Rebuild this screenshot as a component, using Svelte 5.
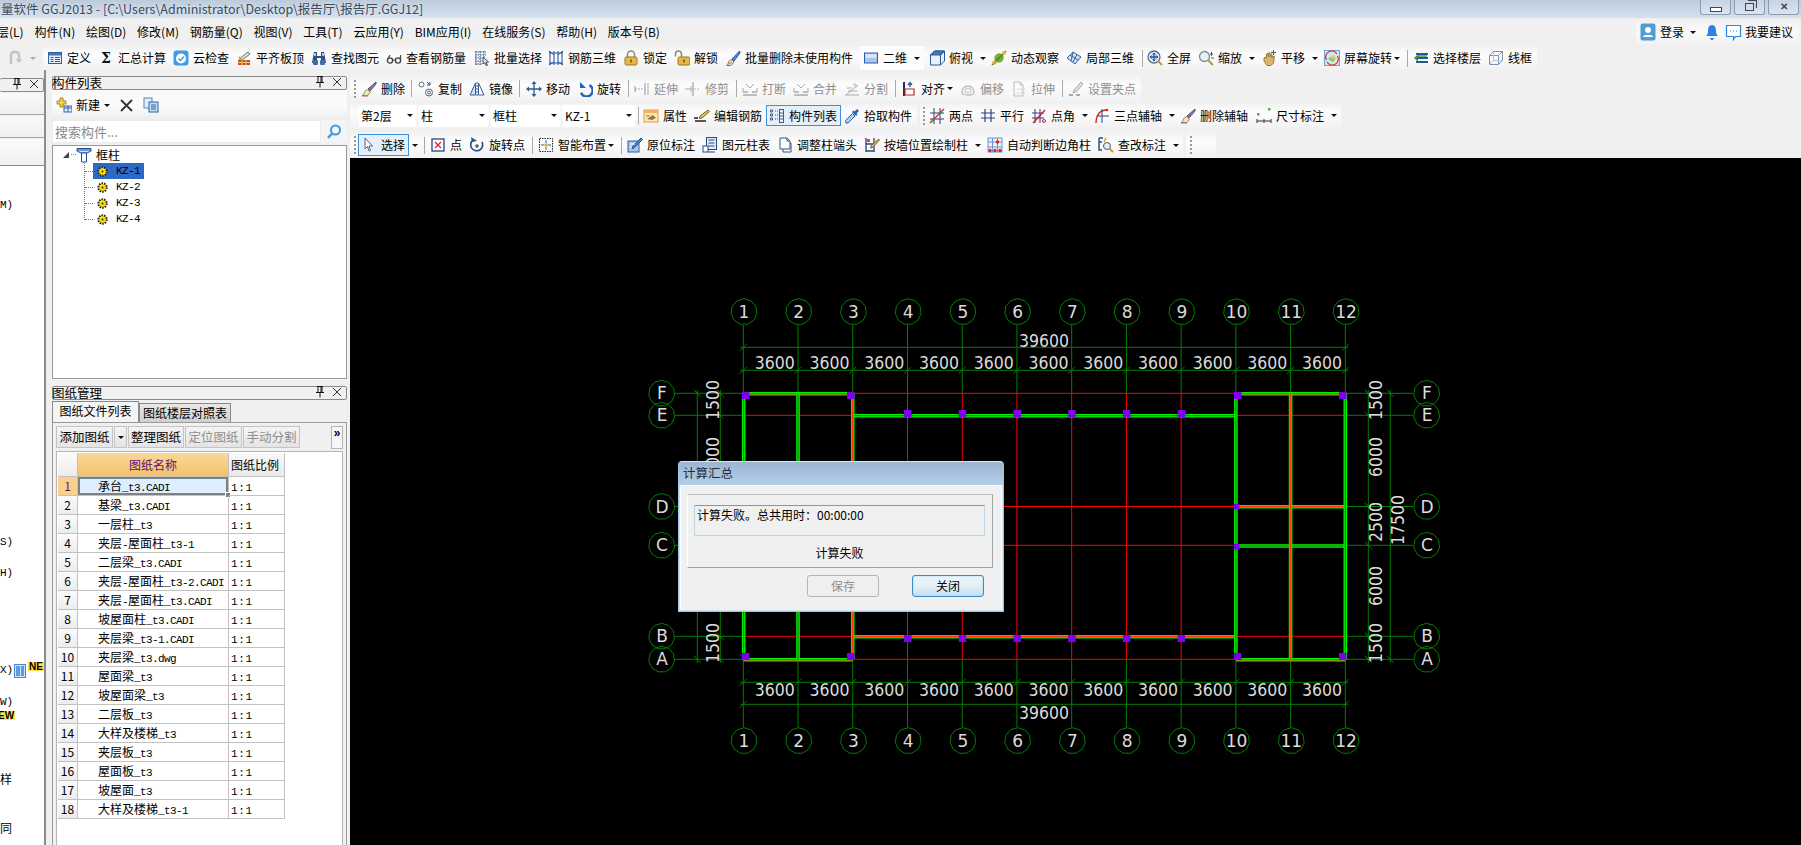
<script>
const I = {
  def:`<rect x="1.5" y="2.5" width="13" height="11" fill="#e4edf8" stroke="#2f5f9e"/><rect x="2" y="3" width="12" height="2.5" fill="#3f77bd"/><path d="M8 7.5h5M8 9.5h5M8 11.5h5M3.5 7.5h3M3.5 9.5h3M3.5 11.5h3" stroke="#2f5f9e"/>`,
  sigma:`<text x="8" y="13" text-anchor="middle" font-size="14" font-weight="700" font-family="DejaVu Serif" fill="#111">Σ</text>`,
  cloud:`<rect x="0.5" y="0.5" width="15" height="15" rx="3" fill="#3d9be9"/><circle cx="8" cy="8.5" r="5" fill="#fff"/><path d="M5.5 8.5l2 2 3.5-4" fill="none" stroke="#3d9be9" stroke-width="1.5"/>`,
  level:`<rect x="2" y="10" width="12" height="5" fill="#c9521f"/><path d="M2 12.5h12M6 10v5M10 10v5" stroke="#f0c27a"/><path d="M3 9l9-7 2 2-8 6z" fill="#dde3ea" stroke="#69727c"/><path d="M3 7l3 3" stroke="#e0a52c" stroke-width="2"/>`,
  find:`<path d="M3 2h3v4h4V2h3l2 11h-5V8H6v5H1z" fill="#2b4f80"/><rect x="2" y="10" width="5" height="5" rx="1" fill="#3f6ea8"/><rect x="9" y="10" width="5" height="5" rx="1" fill="#3f6ea8"/><path d="M3 3h2v3H3zM11 3h2v3h-2z" fill="#a8c3e4"/>`,
  glass:`<circle cx="4" cy="10.5" r="2.6" fill="none" stroke="#444" stroke-width="1.4"/><circle cx="12" cy="10.5" r="2.6" fill="none" stroke="#444" stroke-width="1.4"/><path d="M6.5 10h3M1.5 9.5L4 5M14.5 9.5V5" stroke="#444" stroke-width="1.2" fill="none"/>`,
  batch:`<path d="M1 2h11M1 5h11M1 8h8M1 11h7M1 14h7M2 1v14M6 1v14M10 1v7" stroke="#2a4f8a" stroke-dasharray="1.5 1"/><path d="M9 7l5.5 5-2.5.3 1.5 3-1.2.5-1.5-3L9 14z" fill="#dfe8f3" stroke="#445"/>`,
  rebar:`<path d="M1 3h14M1 13h14M2 1v14M6 1v14M10 1v14M14 1v14" stroke="#2b5a9e" stroke-width="1.1"/><path d="M1 1l5 4M10 5l5-4M1 15l5-3M10 12l5 3" stroke="#2b5a9e"/>`,
  lock:`<path d="M4.5 7V4.5a3.5 3.5 0 017 0V7" fill="none" stroke="#8d8d7a" stroke-width="1.6"/><rect x="2" y="7" width="12" height="8" rx="1.5" fill="#e6b945" stroke="#9a7518"/><path d="M8 9.5v3" stroke="#6a4d0b" stroke-width="1.5"/>`,
  unlock:`<path d="M1.5 6.5V4a3 3 0 016 0v3" fill="none" stroke="#8d8d7a" stroke-width="1.6"/><rect x="4" y="7" width="12" height="8" rx="1.5" fill="#e6b945" stroke="#9a7518"/><path d="M10 9.5v3" stroke="#6a4d0b" stroke-width="1.5"/>`,
  brush:`<path d="M14.5 1L7 9l2 2 6-8z" fill="#5a86cc" stroke="#2c5a9e"/><path d="M6.5 9.5l2.5 2.5-3 3.5H1.5c1.500-1 2-3 2-4z" fill="#ede3bd" stroke="#8b7c58"/><path d="M2 15l5-3" stroke="#cf6a8a"/>`,
  d2:`<rect x="1.5" y="3" width="13" height="10" fill="#a9c5ec" stroke="#2a5db0"/><rect x="2.500" y="4" width="11" height="4" fill="#d5e4f7"/>`,
  top:`<path d="M1.5 5l4-4h10v10l-4 4h-10z" fill="#e8f1fa" stroke="#2c5a94"/><path d="M1.5 5l4-4h10l-4 4z" fill="#3f78bd" stroke="#2c5a94"/><path d="M11.5 5v10M11.500 5l4-4" stroke="#2c5a94"/>`,
  orbit:`<ellipse cx="8" cy="8" rx="5" ry="4.5" fill="#6fb43a" transform="rotate(-40 8 8)"/><path d="M1 15L15 1" stroke="#5a7a2a" stroke-width="1.4"/><circle cx="13" cy="3" r="2" fill="#e4b53a"/><circle cx="3.500" cy="12.500" r="2" fill="#d9a62b"/>`,
  local:`<path d="M1 8l6-6 8 5-6 7z" fill="#cfe0f3" stroke="#33639f"/><path d="M4 5l8 5M7 2l-2 9M11 4.500l-4 7.500" stroke="#33639f"/>`,
  full:`<circle cx="7" cy="7" r="6" fill="#d9e7f6" stroke="#5a6f86" stroke-width="1.300"/><path d="M7 3v8M3 7h8" stroke="#22509b" stroke-width="1.300"/><path d="M5.500 4.500L7 3l1.500 1.500M5.500 9.500L7 11l1.500-1.500M4.500 5.500L3 7l1.500 1.500M9.500 5.500L11 7 9.500 8.500" fill="none" stroke="#22509b"/><path d="M11 11l4 4" stroke="#c79a3a" stroke-width="2.200"/>`,
  zoom:`<circle cx="6.500" cy="6.500" r="5" fill="#e7eff7" stroke="#7d8c9c" stroke-width="1.300"/><path d="M10 10l5 5" stroke="#c79a3a" stroke-width="2.200"/><path d="M13.500 2v4M12 4h3M13 8h3" stroke="#555"/>`,
  pan:`<path d="M3 8l1-1 1.500 1V4l1.200-.6L7.500 7V3l1.300-.4L9.500 7V4l1.300 0L11 8l1-2 1.300.4-.8 6.600-2.500 2.500H6L3 11z" fill="#d9b76a" stroke="#9b7c38"/><path d="M12.500 0v5M10 2.500h5" stroke="#555"/>`,
  screen:`<rect x="0.500" y="0.500" width="15" height="15" fill="#cfe8f7" stroke="#6fa6d0"/><path d="M4 9l4-3 4 2-3 4z" fill="#9ac24a"/><circle cx="9" cy="7" r="2" fill="#f0cc4a"/><path d="M2.500 10A6 6 0 0113 4M13.500 6A6 6 0 013 12" fill="none" stroke="#e0392f" stroke-width="1.300"/>`,
  floors:`<path d="M3 4h12M3 8h12M3 12h12" stroke="#1f5c96" stroke-width="2.200"/><path d="M1 8l4-3.500v7z" fill="#2f8f3a"/><path d="M5 6h9" stroke="#3a9a3a" stroke-width="1.500"/>`,
  wire:`<path d="M1.500 5.500l4-4h9v9l-4 4h-9zM1.500 5.500h9v9M10.500 5.500l4-4" fill="none" stroke="#7e93ad"/><path d="M5.500 1.500v9h9M5.500 10.500l-4 4" fill="none" stroke="#b5c2d2"/>`,
  erase:`<path d="M15 1L7 8l2 2 6-7z" fill="#8c6ec9" stroke="#555"/><path d="M6.500 8.500l3 2.500-2.500 3.500H1c2-1 2.500-3 2.500-4z" fill="#f0e5b9" stroke="#9a8b60"/><path d="M1 15h6" stroke="#c05a6a"/>`,
  copy:`<circle cx="3.500" cy="3.500" r="2.500" fill="none" stroke="#5a6b80"/><circle cx="11" cy="11.500" r="3.500" fill="none" stroke="#5a6b80"/><circle cx="11" cy="11.500" r="1.500" fill="none" stroke="#5a6b80"/><path d="M9 1l3 3M12 1v3H9" fill="none" stroke="#2a4f8a"/>`,
  mirror:`<path d="M1 14L6.500 2v12z" fill="#cfe0f3" stroke="#3a5f92"/><path d="M15 14L9.500 2v12z" fill="#fff" stroke="#3a5f92"/><path d="M8 1v14" stroke="#3a5f92" stroke-dasharray="2 1"/>`,
  move:`<path d="M8 1v14M1 8h14" stroke="#2d5a94" stroke-width="1.300"/><path d="M8 0l-2.500 3h5zM8 16l-2.500-3h5zM0 8l3-2.500v5zM16 8l-3-2.500v5z" fill="#2d5a94"/>`,
  rot:`<path d="M12.500 5A6 6 0 103 11" fill="none" stroke="#1f63c0" stroke-width="2.400" transform="rotate(170 8 8)"/><path d="M3 1v6h6z" fill="#1f63c0"/>`,
  ext:`<path d="M1 5v6M11 2v12" stroke="#aaa" stroke-width="1.300"/><path d="M1 8h9" stroke="#aaa" stroke-dasharray="2 1"/><path d="M14 2v12" stroke="#aaa"/>`,
  trim:`<path d="M8 1v14" stroke="#aaa" stroke-width="1.300"/><path d="M6 5v6" stroke="#bbb"/><path d="M0 8h8" stroke="#aaa"/><path d="M9 8h6" stroke="#bbb" stroke-dasharray="2 1"/>`,
  brk:`<path d="M1 11h5M10 11h5M1 14h14" stroke="#aaa" stroke-width="1.500"/><path d="M4 3l4 4 4-4" fill="none" stroke="#aaa"/><path d="M1 7v4M15 7v4" stroke="#aaa"/>`,
  split:`<path d="M1 14h14M2 14L14 4M4 10h9M3 7h5" stroke="#aaa" fill="none"/><path d="M11 2l3 3-2 2-3-3z" fill="#ccc"/>`,
  align:`<rect x="2" y="1" width="2" height="14" fill="#222d66"/><path d="M4 8h9v6H4z" fill="#fff" stroke="#b22" stroke-width="1.200"/><path d="M9 6V2M7 4l2-2.500L11 4" fill="none" stroke="#1f5aa0" stroke-width="1.300"/>`,
  offs:`<path d="M2 11a6 6 0 1112 0c0 2-2 3-6 3s-6-1-6-3z" fill="none" stroke="#bbb" stroke-width="1.300"/><path d="M5 10a3 3 0 116 0c0 1-1 1.500-3 1.500S5 11 5 10z" fill="none" stroke="#bbb"/>`,
  stre:`<path d="M3 1h6l3 3v11H3z" fill="none" stroke="#bbb"/><path d="M9 1v3h3" fill="none" stroke="#bbb"/><path d="M6 8h8M6 12h8" stroke="#ccc" stroke-dasharray="2 1"/>`,
  setp:`<path d="M13 1l2 2-7 8-3 1 1-3z" fill="#ddd" stroke="#aaa"/><path d="M1 14h4M8 14h4" stroke="#aaa" stroke-width="2"/>`,
  attr:`<rect x="1" y="2" width="14" height="12" fill="#fbe7bf" stroke="#e09a32"/><rect x="1" y="2" width="14" height="3" fill="#f2b458"/><path d="M4 11l6-4 3 3-4 2z" fill="#9b7830"/><path d="M3 8h4" stroke="#9b7830"/>`,
  edit:`<path d="M14 2l1.500 1.500L8 10l-2.500.5.500-2.500z" fill="#e7c65c" stroke="#76602a"/><path d="M0 10h4M1 13h11" stroke="#222" stroke-width="1.300"/>`,
  list:`<path d="M1.500 2h2v2h-2zM1.500 6h2v2h-2zM1.500 10h2v2h-2z" fill="none" stroke="#4a5d78"/><path d="M6 3h3M6 7h3M6 11h3" stroke="#555" stroke-dasharray="1 1"/><rect x="10.500" y="1.500" width="4" height="13" fill="#eef3f9" stroke="#4a5d78"/><path d="M10.500 5h4M10.500 8h4M10.500 11h4" stroke="#4a5d78"/>`,
  pick:`<path d="M2 15l-.5-2.500 7-7 2.500 2.500-7 7z" fill="#a9d0f0" stroke="#2b62a8"/><path d="M8 4l4 4 1.500-1.500-1-1 2-2a1.500 1.500 0 00-2-2l-2 2-1-1z" fill="#2b62a8"/>`,
  twop:`<path d="M1 5h14M1 11h14" stroke="#333f7a"/><path d="M5 0v16M11 0v16" stroke="#333f7a"/><path d="M1 15L15 1" stroke="#c22" stroke-width="1.200"/><circle cx="4" cy="12" r="1.500" fill="#3a9a3a"/><circle cx="12" cy="4" r="1.500" fill="#3a9a3a"/>`,
  para:`<path d="M1 5h14M1 10h14M5 1v13M11 1v13" stroke="#2f3f8a" stroke-width="1.200"/>`,
  angle:`<path d="M1 5h12M1 10h12M4 1v14M9 1v14" stroke="#2f3f8a"/><path d="M2 15L14 2" stroke="#c22" stroke-width="1.400"/><circle cx="13" cy="13" r="1.500" fill="none" stroke="#c22"/>`,
  three:`<path d="M2 15C2 7 6 2 13 2" fill="none" stroke="#c22" stroke-width="1.300"/><path d="M8 1v14M3 8h12" stroke="#2f3f8a"/><circle cx="13" cy="2" r="1.300" fill="#c22"/>`,
  dim:`<rect x="1" y="5" width="2.500" height="2.500" fill="#4caf3f"/><rect x="12" y="0" width="2.500" height="2.500" fill="#4caf3f"/><path d="M1 11v4M8 11v4M15 11v4M1 13h14" stroke="#333"/>`,
  cursor:`<path d="M4 1l7.500 8H8l1.500 4.500-1.500.5L6.500 9.500 4 12z" fill="#f3f6fb" stroke="#5c6878"/>`,
  point:`<rect x="2" y="2" width="12" height="12" fill="#fff" stroke="#27408b" stroke-width="1.300"/><path d="M5 5l6 6M11 5l-6 6" stroke="#d22" stroke-width="1.200"/>`,
  rotp:`<path d="M4 3a6 6 0 109 2" fill="none" stroke="#27508b" stroke-width="1.700"/><path d="M2 0l1 5 5-1z" fill="#27508b"/><path d="M8 7v4M6 9h4" stroke="#333"/>`,
  smart:`<rect x="1.500" y="1.500" width="13" height="13" fill="#fff" stroke="#222" stroke-dasharray="1.500 1"/><path d="M8 3v3M8 10v3M3 8h3M10 8h3" stroke="#2b5a9e"/><rect x="6.500" y="6.500" width="3" height="3" fill="#d9a62b"/>`,
  inpl:`<rect x="1" y="4" width="11" height="11" fill="#a8c6ea" stroke="#2f5f9e"/><path d="M14 1l1.500 1.500L7 11l-2 .5.500-2z" fill="#4f86cc" stroke="#224f8e"/><path d="M3 7h5M3 10h2" stroke="#fff"/>`,
  tabl:`<rect x="4.500" y="0.500" width="10" height="12" fill="#e3edf9" stroke="#24498b"/><path d="M6.500 3h6M6.500 6h6M6.500 9h6" stroke="#24498b"/><rect x="1" y="9" width="5" height="6" fill="#fff" stroke="#24498b"/><path d="M6 15h7" stroke="#24498b"/>`,
  adj:`<path d="M3 1h7l3 3v8H3zM6 12v3h8V6h-1" fill="#fff" stroke="#33557f"/><path d="M10 1v3h3" fill="none" stroke="#33557f"/>`,
  wall:`<path d="M2 1v14M10 1v14M2 7h8M2 14h8" stroke="#27408b" stroke-width="1.300"/><rect x="3" y="2" width="3" height="3" fill="#d64a3f"/><path d="M14.500 2l1 1-7 7.500-2 .5.500-2z" fill="#e6c25a" stroke="#7a5f24"/>`,
  auto:`<rect x="1" y="1" width="14" height="14" fill="#eaf1fa" stroke="#6d93c9"/><path d="M1 5h14M1 10h14M5.500 1v14M10.500 1v14" stroke="#6d93c9"/><circle cx="10.500" cy="5" r="1.700" fill="#d22"/><circle cx="3" cy="13.500" r="1.700" fill="#d22"/><circle cx="8" cy="13.500" r="1.700" fill="#d22"/><circle cx="13" cy="13.500" r="1.700" fill="#d22"/>`,
  chk:`<path d="M1 1h4M1 5h3M1 1v12h3" fill="none" stroke="#24498b" stroke-width="1.400"/><path d="M8 1l-2 4" stroke="#e0a52c" stroke-width="1.500"/><circle cx="9" cy="9" r="3.500" fill="#e5eef7" stroke="#556"/><path d="M11.500 11.500l3.500 3.500" stroke="#c79a3a" stroke-width="2"/>`,
  redo:`<path d="M3 14V5a3 3 0 013-3h2a3 3 0 013 3v5" fill="none" stroke="#c4c4c4" stroke-width="2.400"/><path d="M7.500 9h7L11 13z" fill="#c4c4c4"/>`,
  add:`<path d="M4 1h3v3h3v3H7v3H4V7H1V4h3z" fill="#f2d24a" stroke="#a78a1e"/><rect x="8" y="9" width="8" height="6" fill="#e3edf9" stroke="#33659f"/><path d="M8 11h8M12 9v6" stroke="#33659f"/>`,
  del:`<path d="M2 2l11 11M13 2L2 13" stroke="#333" stroke-width="1.800"/>`,
  dup:`<rect x="1" y="1" width="8" height="10" fill="#e3edf9" stroke="#5b87bb"/><rect x="6" y="5" width="9" height="10" fill="#c8dcf3" stroke="#2b62a8"/><path d="M8 8h5M8 10h5M8 12h5" stroke="#2b62a8"/>`,
  search:`<circle cx="9.500" cy="6" r="4.500" fill="#eff7fd" stroke="#3f9bdc" stroke-width="2"/><path d="M6 9.500L2 14" stroke="#3f9bdc" stroke-width="2.500"/>`,
  tree:`<path d="M1 1.500h14v2.500L11 6H5L1 4z" fill="#cfe2f6" stroke="#1c4fa0"/><path d="M5.500 6h5v9h-5z" fill="#fff" stroke="#1c4fa0"/><path d="M1 3h14" stroke="#1c4fa0"/>`,
  pin:`<path d="M5 1.500h6M6 1.500v6M10 1.500v6M4 7.500h8M8 7.500v5" stroke="#111" fill="none"/><path d="M8.500 2v5h1V2z" fill="#111"/>`,
  cross:`<path d="M4 3l8 8M12 3l-8 8" stroke="#333" fill="none"/>`,
  user:`<rect x="0.500" y="0.500" width="15" height="17" rx="2" fill="#4d9ed6"/><circle cx="8" cy="7" r="3" fill="#fff"/><path d="M3 14c0-3 10-3 10 0z" fill="#fff"/>`,
  bell:`<path d="M8 1c3 0 4 3 4 6s1 4 2 5H2c1-1 2-2 2-5s1-6 4-6z" fill="#2a83e4"/><path d="M6 14h4a2 2 0 01-4 0z" fill="#2a83e4"/>`,
  chat:`<path d="M1.500 1.500h14v11h-5l-2 3v-3h-7z" fill="#fff" stroke="#2a83e4" stroke-width="1.200"/><path d="M5 7h1M8 7h1M11 7h1" stroke="#2a83e4"/>`,
  gear:`<circle cx="5.500" cy="5.500" r="4.200" fill="#ffe600" stroke="#222" stroke-width="2" stroke-dasharray="1.500 1.100"/><circle cx="5.500" cy="5.500" r="2.600" fill="#ffe600"/><circle cx="5.500" cy="5.500" r="1.100" fill="#333"/>`
};
const T=(x,i,t,o={})=>({k:'t',x,i,t,...o});
const S=(x)=>({k:'s',x});
const G=(x)=>({k:'g',x});
const C=(x,t)=>({k:'c',x,t});
const bars=(list)=>list.map((b,bi)=>({...b,ml:bi?b.start-list[bi-1].end:0,items:b.items.map((it,i)=>({...it,w:(b.items[i+1]?b.items[i+1].x:b.end)-it.x})),pl:b.items[0].x-b.start}));

const row1=bars([
 {start:43,end:860,items:[T(47,'def','定义'),T(98,'sigma','汇总计算'),T(173,'cloud','云检查'),T(236,'level','平齐板顶'),T(311,'find','查找图元'),T(386,'glass','查看钢筋量'),T(474,'batch','批量选择'),T(548,'rebar','钢筋三维'),T(623,'lock','锁定'),T(674,'unlock','解锁'),T(725,'brush','批量删除未使用构件')]},
 {start:860,end:924,white:true,items:[T(863,'d2','二维',{a:7})]},
 {start:924,end:1537,items:[T(929,'top','俯视',{a:7}),T(991,'orbit','动态观察'),T(1066,'local','局部三维'),S(1142),T(1147,'full','全屏'),T(1198,'zoom','缩放',{a:7}),T(1261,'pan','平移',{a:7}),T(1324,'screen','屏幕旋转',{a:2}),S(1407),T(1413,'floors','选择楼层'),T(1488,'wire','线框')]}
]);
const row2=bars([{start:350,end:1141,items:[G(354),T(361,'erase','删除'),S(411),T(418,'copy','复制'),T(469,'mirror','镜像'),S(519),T(526,'move','移动'),T(577,'rot','旋转'),S(628),T(634,'ext','延伸',{d:1}),T(685,'trim','修剪',{d:1}),S(736),T(742,'brk','打断',{d:1}),T(793,'brk','合并',{d:1}),T(844,'split','分割',{d:1}),S(895),T(901,'align','对齐',{a:2}),T(960,'offs','偏移',{d:1}),T(1011,'stre','拉伸',{d:1}),S(1062),T(1068,'setp','设置夹点',{d:1})]}]);
const row3=bars([
 {start:350,end:917,items:[C(359,'第2层'),C(419,'柱'),C(491,'框柱'),C(563,'KZ-1'),S(638),T(643,'attr','属性'),T(694,'edit','编辑钢筋'),T(769,'list','构件列表',{box:75}),T(844,'pick','拾取构件')]},
 {start:920,end:1341,items:[G(923),T(929,'twop','两点'),T(980,'para','平行'),T(1031,'angle','点角',{a:7}),T(1094,'three','三点辅轴',{a:7}),T(1180,'erase','删除辅轴'),T(1256,'dim','尺寸标注',{a:7})]}
]);
const row4=bars([
 {start:350,end:1183,items:[G(354),T(361,'cursor','选择',{box:51,a:7}),S(424),T(430,'point','点'),T(469,'rotp','旋转点'),S(532),T(538,'smart','智能布置',{a:2}),S(621),T(627,'inpl','原位标注'),T(702,'tabl','图元柱表'),T(777,'adj','调整柱端头'),T(864,'wall','按墙位置绘制柱',{a:7}),T(987,'auto','自动判断边角柱'),T(1098,'chk','查改标注',{a:7})]},
 {start:1186,end:1216,items:[G(1190)]}
]);
const menu=['层(L)','构件(N)','绘图(D)','修改(M)','钢筋量(Q)','视图(V)','工具(T)','云应用(Y)','BIM应用(I)','在线服务(S)','帮助(H)','版本号(B)'];
const drawings=['承台_t3.CADI','基梁_t3.CADI','一层柱_t3','夹层-屋面柱_t3-1','二层梁_t3.CADI','夹层-屋面柱_t3-2.CADI','夹层-屋面柱_t3.CADI','坡屋面柱_t3.CADI','夹层梁_t3-1.CADI','夹层梁_t3.dwg','屋面梁_t3','坡屋面梁_t3','二层板_t3','大样及楼梯_t3','夹层板_t3','屋面板_t3','坡屋面_t3','大样及楼梯_t3-1'];
const runs=(s)=>s.split(/([\x00-\x7f]+)/).filter(Boolean).map(t=>({t,lat:/^[\x00-\x7f]/.test(t)}));
const kz=['KZ-1','KZ-2','KZ-3','KZ-4'];
const railGaps=[{h:46,t:'M)'},{h:337,t:'S)'},{h:31,t:'H)'},{h:97,t:'X)',ne:true},{h:32,t:'W)'},{h:11,t:'',ew:true},{h:68,t:'样',c:1},{h:49,t:'同',c:1}];

// drawing
const xs=Array.from({length:12},(_,i)=>743.3+54.73*i);
const ys={F:393.3,E:415.3,D:506.5,C:545.3,B:636.3,A:659.3};
const rowsY=Object.values(ys);
const names=Object.keys(ys);
const gon=(cx,cy,r=13)=>Array.from({length:11},(_,i)=>{const a=-Math.PI/2+i*2*Math.PI/11;return (cx+r*Math.cos(a)).toFixed(1)+','+(cy+r*Math.sin(a)).toFixed(1)}).join(' ');
const tick=(x,y)=>`M${x-3.5} ${y+3.5}L${x+3.5} ${y-3.500}`;
const tickV=(x,y)=>`M${x-3.5} ${y-3.5}L${x+3.5} ${y+3.500}`;
const hTicks=[347.3,370.3,682.3,704.3].flatMap((y,i)=>(i==0||i==3?[xs[0],xs[11]]:xs).map(x=>tick(x,y))).join('');
const vTicks=[697.3,720.3,1368.3,1390.3].flatMap((x,i)=>(i==0||i==3?[ys.F,ys.A]:rowsY).map(y=>tickV(x,y))).join('');
const OR=['#ff3a00',1.6], DK=['#0a3a00',.7];
const walls=[
 [xs[0],393.7,xs[2],393.7,OR],[xs[9],393.7,xs[11],393.7,OR],
 [xs[2],415.7,xs[9],415.7,DK],[xs[9],506.7,xs[11],506.7,OR],[xs[9],546,xs[11],546,DK],
 [xs[2],636.7,xs[9],636.7,OR],[xs[0],659.7,xs[2],659.7,OR],[xs[9],659.7,xs[11],659.7,OR],
 [xs[0]+.4,393,xs[0]+.4,660,DK],[xs[1],393,xs[1],660,DK],[xs[2],393,xs[2],660,OR],
 [xs[9],393,xs[9],660,DK],[xs[10],393,xs[10],660,OR],[xs[11],393,xs[11],660,DK]
];
const purple=[[742,392],[847,392],[1234,392],[1339,392],[742,653],[847,653],[1234,653],[1339,653],
 ...[3,4,5,6,7,8].flatMap(i=>[[xs[i]-3.500,410],[xs[i]-3.500,635]])];
const purpleSm=[[1234,504],[1234,544]];
const vText=[[712.7,400,'1500'],[712.7,457,'6000'],[712.7,643,'1500'],[1375.7,400,'1500'],[1375.7,457,'6000'],[1375.7,522,'2500'],[1375.7,586,'6000'],[1375.7,643,'1500'],[1397.7,520,'17500']];
</script>

{#snippet icon(n,w=16,h=16)}
  <svg class="ic" width={w} height={h} viewBox="0 0 {w} {h}">{@html I[n]}</svg>
{/snippet}

{#snippet bar(b)}
  <div class="bar" class:white={b.white} style="width:{b.end-b.start}px;padding-left:{b.pl}px;margin-left:{b.ml}px">
    {#each b.items as it}
      <div class="slot" style="width:{it.w}px">
        {#if it.k==='s'}<span class="sep"></span>
        {:else if it.k==='g'}<span class="grip"></span>
        {:else if it.k==='c'}
          <div class="combo"><span>{it.t}</span><i class="arr"></i></div>
        {:else}
          {#if it.box}<span class="actbox" style="width:{it.box}px"></span>{/if}
          <span class="icb">{@render icon(it.i)}</span>
          <span class="lab" class:dis={it.d}>{it.t}</span>
          {#if it.a}<i class="arr" style="margin-left:{it.a}px"></i>{/if}
        {/if}
      </div>
    {/each}
  </div>
{/snippet}

{#snippet rich(s)}
  {#each runs(s) as r}{#if r.lat}<span class="lat">{r.t}</span>{:else}{r.t}{/if}{/each}
{/snippet}

{#snippet phead(title)}
  <div class="phead"><span class="phtxt">{title}</span><span class="phbtns">{@render icon('pin')}{@render icon('cross')}</span></div>
{/snippet}

<div class="app">
  <header class="title">
    <span class="ttext">量软件 GGJ2013 - [C:\Users\Administrator\Desktop\报告厅\报告厅.GGJ12]</span>
    <div class="winbtns">
      <button class="wb" aria-label="最小化"><span class="wmin"></span></button>
      <button class="wb" aria-label="还原"><span class="wres"></span></button>
      <button class="wb" aria-label="关闭"><span class="wx">✕</span></button>
    </div>
  </header>

  <nav class="menu">
    <div class="mitems">{#each menu as m}<span>{m}</span>{/each}</div>
    <div class="login">
      <span class="lg1">{@render icon('user',16,18)}</span><span>登录</span><i class="arr lga"></i>
      <span class="lg2">{@render icon('bell')}</span>
      <span class="lg3">{@render icon('chat',17,17)}</span><span>我要建议</span>
    </div>
  </nav>

  <div class="row1">
    <div class="undo">{@render icon('redo')}<i class="arr gray"></i></div>
    {#each row1 as b}{@render bar(b)}{/each}
  </div>

  <div class="work">
    <aside class="rail">
      <div class="phead railh"><span class="phbtns">{@render icon('pin')}{@render icon('cross')}</span></div>
      <div class="rsec"></div>
      <div class="rsec"></div>
      <div class="rgrad"></div>
      <div class="rlist">
        {#each railGaps as r}
          <div class="ritem" class:cj={r.c} style="height:{r.h}px">
            {#if r.ew}<span class="badge ew">EW</span>{:else}<span>{r.t}</span>{/if}
            {#if r.ne}<span class="colicon"><i></i><i></i></span><span class="badge ne">NE</span>{/if}
          </div>
        {/each}
      </div>
    </aside>

    <section class="panels">
      {@render phead('构件列表')}
      <div class="ptools">
        <span class="pi1">{@render icon('add')}</span><span>新建</span><i class="arr pa"></i>
        <span class="pi2">{@render icon('del',15,15)}</span>
        <span class="pi3">{@render icon('dup')}</span>
      </div>
      <div class="searchrow">
        <div class="search">搜索构件...</div>
        <span class="sbtn">{@render icon('search')}</span>
      </div>
      <div class="treebox">
        <div class="tnode root"><i class="tri"></i><span class="dots"></span>{@render icon('tree')}<span>框柱</span></div>
        <div class="vline"></div>
        {#each kz as k,i}
          <div class="tnode leaf">
            <span class="hd"></span>
            <span class="leafbox" class:sel={i===0}>{@render icon('gear',11,11)}<span class="kz">{k}</span></span>
          </div>
        {/each}
      </div>

      <div class="gap2"></div>
      {@render phead('图纸管理')}
      <div class="tabs">
        <span class="tab on">图纸文件列表</span>
        <span class="tab">图纸楼层对照表</span>
      </div>
      <div class="tabbody">
        <div class="dtools">
          <span class="dbtn b1">添加图纸</span><span class="dbtn bd"><i class="arr"></i></span>
          <span class="dbtn b2">整理图纸</span><span class="dbtn b3 off">定位图纸</span><span class="dbtn b3 off">手动分割</span>
          <span class="more">»</span>
        </div>
        <div class="tablebox">
          <table>
            <thead><tr><th class="n"></th><th class="nm">图纸名称</th><th class="rt">图纸比例</th></tr></thead>
            <tbody>
              {#each drawings as d,i}
                <tr class:first={i===0}>
                  <td class="n"><div class="cell">{i+1}</div></td>
                  <td class="nm"><div class="cell">{@render rich(d)}</div>{#if i===0}<span class="handle"></span>{/if}</td>
                  <td class="rt"><div class="cell"><span class="lat wide">1:1</span></div></td>
                </tr>
              {/each}
            </tbody>
          </table>
        </div>
      </div>
    </section>

    <main class="main">
      <div class="trow r2">{#each row2 as b}{@render bar(b)}{/each}</div>
      <div class="trow r3">{#each row3 as b}{@render bar(b)}{/each}</div>
      <div class="trow r4">{#each row4 as b}{@render bar(b)}{/each}</div>
      <div class="canvas">
        <svg class="cad" width="1451" height="687" viewBox="350 158 1451 687">
          <g stroke="#007f00" fill="none">
            {#each xs as x}<path d="M{x} 325V393M{x} 660V727"/>{/each}
            {#each rowsY as y}<path d="M675 {y}H{xs[0]}M{xs[11]} {y}H1413"/>{/each}
            <path d="M{xs[0]-3} 347.3H{xs[11]+3}M{xs[0]-3} 370.3H{xs[11]+3}M{xs[0]-3} 682.3H{xs[11]+3}M{xs[0]-3} 704.3H{xs[11]+3}"/>
            <path d="M697.3 390V663M720.3 390V663M1368.3 390V663M1390.3 390V663"/>
            <path d={hTicks}/><path d={vTicks}/>
            {#each xs as x}<polygon points={gon(x+.7,311.7)}/><polygon points={gon(x+.7,740.7)}/>{/each}
            {#each rowsY as y,i}<polygon points={gon(661.7,y)}/><polygon points={gon(1426.7,y)}/>{/each}
          </g>
          <g stroke="#ff0000" fill="none">
            {#each rowsY as y}<path d="M{xs[0]} {y}H{xs[11]}"/>{/each}
            {#each [3,4,5,6,7,8] as i}<path d="M{xs[i]} {ys.F}V{ys.A}"/>{/each}
          </g>
          <g fill="none">
            {#each walls as w}
              <path d="M{w[0]} {w[1]}L{w[2]} {w[3]}" stroke="#00f500" stroke-width="3.600"/>
              <path d="M{w[0]} {w[1]}L{w[2]} {w[3]}" stroke={w[4][0]} stroke-width={w[4][1]}/>
            {/each}
          </g>
          <g fill="#7f00f0">
            {#each purple as p}<rect x={p[0]} y={p[1]} width="7.500" height="7"/>{/each}
            {#each purpleSm as p}<rect x={p[0]} y={p[1]} width="5.500" height="5.500"/>{/each}
          </g>
          <g class="cadtext">
            {#each xs as x,i}
              <text x={x+.7} y="317.700" text-anchor="middle">{i+1}</text>
              <text x={x+.7} y="746.700" text-anchor="middle">{i+1}</text>
            {/each}
            {#each rowsY as y,i}
              <text x="662" y={y+6} text-anchor="middle">{names[i]}</text>
              <text x="1427" y={y+6} text-anchor="middle">{names[i]}</text>
            {/each}
            {#each xs.slice(0,11) as x}
              <text x={x+31.500} y="369" text-anchor="middle" textLength="40" lengthAdjust="spacingAndGlyphs">3600</text>
              <text x={x+31.500} y="695.500" text-anchor="middle" textLength="40" lengthAdjust="spacingAndGlyphs">3600</text>
            {/each}
            <text x="1044" y="347" text-anchor="middle" textLength="50" lengthAdjust="spacingAndGlyphs">39600</text>
            <text x="1044" y="718.500" text-anchor="middle" textLength="50" lengthAdjust="spacingAndGlyphs">39600</text>
            {#each vText as v}
              <text transform="translate({v[0]+6.500} {v[1]}) rotate(-90)" text-anchor="middle" textLength={v[2].length*10} lengthAdjust="spacingAndGlyphs">{v[2]}</text>
            {/each}
          </g>
        </svg>

        <div class="dialog">
          <div class="dtitle">计算汇总</div>
          <div class="dbody">
            <div class="group">
              <div class="msg">计算失败。总共用时：00:00:00</div>
              <div class="status">计算失败</div>
            </div>
            <div class="dbtns">
              <button class="btn" disabled>保存</button>
              <button class="btn primary">关闭</button>
            </div>
          </div>
        </div>
      </div>
    </main>
  </div>
</div>

<style>
:global(body){margin:0;background:#f0f0f0;}
.app{width:1801px;height:845px;overflow:hidden;display:flex;flex-direction:column;background:#f0f0f0;color:#000;font:12px/16px "Noto Sans CJK SC","Liberation Sans",sans-serif;position:relative;}
.ic{display:block;flex:none;}
.title{height:18px;flex:none;display:flex;justify-content:space-between;background:linear-gradient(#bccada,#d4e1ef);}
.ttext{font-size:12.500px;line-height:17px;color:#3c4a5c;margin-left:1px;white-space:nowrap;text-shadow:0 0 3px #e6eef7;}
.winbtns{display:flex;gap:3px;margin-right:2px;height:15px;}
.wb{width:31px;height:15px;padding:0;border:1px solid #8a9cb2;border-top:0;border-radius:0 0 3px 3px;background:linear-gradient(#c7d3e1,#dbe5f0);display:flex;align-items:center;justify-content:center;color:#445;}
.wmin{display:block;width:10px;height:3px;border:1px solid #445;background:#fff;margin-top:4px;}
.wres{display:block;width:7px;height:6px;border:1px solid #445;box-shadow:2px -2px 0 0 #c7d3e1,3px -3px 0 0 #445;}
.wx{font-size:10px;line-height:12px;font-weight:700;}
.menu{height:28px;flex:none;display:flex;justify-content:space-between;align-items:center;}
.mitems{display:flex;gap:10.770px;line-height:28px;white-space:nowrap;margin-left:-3px;}
.login{display:flex;align-items:center;width:163px;height:23px;margin-right:2px;background:linear-gradient(#f3f3f3,#fafafa 50%,#f2f2f2);box-sizing:border-box;padding-left:4px;}
.lg1{margin-right:4px;}.lga{margin-left:6px;}.lg2{margin-left:8px;}.lg3{margin:0 3px 0 5px;}
.row1{height:24px;flex:none;display:flex;}
.undo{width:43px;display:flex;align-items:center;gap:6px;padding-left:8px;box-sizing:border-box;}
.bar{display:flex;align-items:center;box-sizing:border-box;flex:none;background:linear-gradient(#f2f2f2,#fcfcfc 35%,#f7f7f7 70%,#f1f1f1);white-space:nowrap;}
.bar.white{background:#fcfcfc;}
.slot{display:flex;align-items:center;flex:none;position:relative;height:100%;}
.icb{width:16px;height:16px;margin-right:4px;flex:none;position:relative;}
.lab{position:relative;}
.lab.dis{color:#8f8f8f;}
.actbox{position:absolute;left:-3px;top:2px;bottom:2px;background:#e3effa;border:1px solid #3d8fd8;box-sizing:border-box;}
.sep{display:block;width:1px;height:17px;background:#a9a9a9;}
.grip{display:block;width:2px;height:18px;background:repeating-linear-gradient(#999 0 2px,transparent 2px 4px);}
.arr{display:inline-block;width:0;height:0;border:solid transparent;border-width:3px 3px 0;border-top-color:#111;flex:none;}
.arr.gray{border-top-color:#aaa;}
.combo{display:flex;align-items:center;justify-content:space-between;background:#fff;height:22px;width:calc(100% - 3px);box-sizing:border-box;padding:0 3px 0 2px;}
.work{flex:1;min-height:0;display:flex;}
.rail{width:46px;flex:none;box-sizing:border-box;border-right:2px solid #8c8c8c;padding-top:6px;display:flex;flex-direction:column;overflow:hidden;}
.phead{height:14px;flex:none;box-sizing:border-box;border:1px solid #8a8a8a;border-radius:2px;display:flex;align-items:center;justify-content:space-between;font-size:12.500px;line-height:12px;white-space:nowrap;background:#f0f0f0;}
.phtxt{margin-left:-1px;}
.railh{border-left:0;justify-content:flex-end;margin-top:2px;}
.phbtns{display:flex;gap:1px;margin-right:1px;}
.rsec{height:21px;margin-top:1px;border-bottom:1px solid #a5a5a5;background:linear-gradient(#f9f9f9,#efefef);flex:none;}
.rgrad{height:26px;flex:none;background:linear-gradient(#fbfbfb,#f0f0f0);margin-top:1px;}
.rlist{flex:1;background:#fff;border-top:1px solid #8c8c8c;font:11px/13px "Liberation Mono","Noto Sans CJK SC",monospace;}
.ritem{display:flex;align-items:flex-end;gap:1px;box-sizing:border-box;white-space:nowrap;}
.ritem.cj{font-size:12px;}
.colicon{display:flex;gap:1px;width:15px;height:14px;border:1px solid #4b87c9;background:#cfe3f8;box-sizing:border-box;padding:1px;margin-bottom:-1px;}
.colicon i{flex:1;background:#5b9be0;}
.badge{font:700 10px/9px "Liberation Sans",sans-serif;background:#ffe34d;padding:0 1px;}
.badge.ne{margin:0 0 6px 1px;}
.badge.ew{margin-left:-3px;}
.panels{width:295px;flex:none;box-sizing:border-box;margin-left:6px;padding-top:6px;display:flex;flex-direction:column;}
.ptools{height:30px;flex:none;display:flex;align-items:center;background:linear-gradient(#f8f8f8,#fcfcfc 50%,#ededed);padding-left:4px;}
.pi1{margin-right:4px;}.pa{margin-left:4px;}.pi2{margin-left:9px;}.pi3{margin-left:9px;}
.searchrow{height:23px;flex:none;display:flex;margin-bottom:2px;}
.search{width:269px;background:#fff;border:1px solid #ececec;border-radius:2px;box-sizing:border-box;color:#8a8a8a;font-size:13px;line-height:21px;padding-left:2px;}
.sbtn{width:26px;display:flex;align-items:center;justify-content:center;background:#f4f4f4;}
.treebox{height:234px;flex:none;background:#fff;border:1px solid #9a9a9a;box-sizing:border-box;position:relative;font-size:12px;}
.tnode{display:flex;align-items:center;height:16px;}
.root{padding-left:10px;height:17px;}
.tri{width:0;height:0;border-style:solid;border-width:0 0 6px 6px;border-color:transparent transparent #444 transparent;margin-right:2px;}
.dots{width:5px;border-top:1px dotted #888;}
.root .ic{margin-right:4px;}
.vline{position:absolute;left:31px;top:17px;height:57px;border-left:1px dotted #777;}
.hd{width:8px;margin-left:32px;border-top:1px dotted #777;flex:none;}
.leafbox{display:flex;align-items:center;height:16px;width:51px;box-sizing:border-box;padding-left:4px;gap:8px;}
.leafbox.sel{background:#2f69c6;}
.kz{font:11px/16px "Liberation Mono",monospace;letter-spacing:-.6px;}
.gap2{height:7px;flex:none;}
.tabs{height:21px;flex:none;display:flex;align-items:flex-end;margin-top:1px;}
.tab{height:19px;box-sizing:border-box;border:1px solid #8a8a8a;border-bottom:0;background:linear-gradient(#e8e8e8,#cfcfcf);font-size:12px;line-height:18px;width:92px;white-space:nowrap;text-align:center;}
.tab.on{height:21px;width:87px;background:#f4f4f4;}
.tabbody{flex:1;min-height:0;border:1px solid #9a9a9a;border-bottom:0;padding:3px 3px 0 3px;display:flex;flex-direction:column;background:#f0f0f0;}
.dtools{height:22px;flex:none;display:flex;gap:1px;position:relative;}
.dbtn{height:22px;box-sizing:border-box;border:1px solid #c4c4c4;background:linear-gradient(#f4f4f4,#e4e4e4);line-height:20px;text-align:center;display:flex;align-items:center;justify-content:center;white-space:nowrap;font-size:12.500px;}
.b1{width:57px;}.bd{width:13px;}.b2{width:56px;}.b3{width:57px;}
.off{color:#8e8e8e;}
.more{position:absolute;right:0;top:0;width:12px;height:23px;border:1px solid #b5b5b5;box-sizing:border-box;font:700 12px/12px "Liberation Sans",sans-serif;text-align:center;background:#f6f6f6;}
.tablebox{flex:1;min-height:0;margin-top:3px;border:1px solid #b5b5b5;border-bottom:0;background:#fff;padding:1px 0 0 1px;}
table{border-collapse:separate;border-spacing:0;table-layout:fixed;width:227px;font-size:12px;}
th,td{border:solid #c2c2c2;border-width:0 1px 1px 0;padding:0;box-sizing:border-box;white-space:nowrap;position:relative;}
thead th{height:24px;font-weight:400;line-height:17px;background:linear-gradient(#f8f8f8,#e9e9e9);}
th.n,td.n{width:20px;text-align:center;background:linear-gradient(#fbfbfb,#ececec);}
th.nm,td.nm{width:151px;}
th.rt,td.rt{width:56px;}
th.nm{background:linear-gradient(#fbd898,#f3c267);color:#5b0f7c;}
th.rt{text-align:left;padding-left:2px;}
td.nm{padding-left:20px;}
td.rt{padding-left:2px;}
tbody td{height:19px;}
.cell{height:18px;line-height:18px;overflow:visible;}
tr.first td.n{background:#fbd08b;color:#5b0f7c;}
tr.first td.nm{background:#dfeeff;box-shadow:inset 0 0 0 2px #808080;}
.handle{position:absolute;right:-3px;bottom:-3px;width:4px;height:4px;background:#808080;border:1px solid #fff;}
.lat{font:11px/1 "Liberation Mono",monospace;letter-spacing:-.6px;}
.lat.wide{letter-spacing:.6px;}
.main{width:1451px;position:absolute;left:350px;top:70px;height:775px;display:flex;flex-direction:column;}
.trow{display:flex;flex:none;}
.r2{height:25px;margin-top:6px;}
.r3{height:25px;margin-top:2px;}
.r4{height:26px;margin-top:4px;}
.canvas{flex:1;min-height:0;background:#000;position:relative;overflow:hidden;}
.cad{display:block;}
.cadtext text{font:17px "DejaVu Sans",sans-serif;fill:#dcdcdc;}
.dialog{position:absolute;left:328px;top:303px;width:326px;height:151px;border-radius:4px 4px 0 0;border:1px solid #9ccae6;border-top:1px solid #dfe8f1;box-sizing:border-box;background:linear-gradient(#9ab4d2,#b7d0e9 24px,#cfe0ef 24px);display:flex;flex-direction:column;padding:0 1px 1px 1px;}
.dtitle{height:23px;flex:none;line-height:22px;font-size:12.500px;color:#1f2b3a;padding-left:3px;}
.dbody{flex:1;background:#f0f0f0;padding:8px 8px 0 6px;border:1px solid #fff;border-width:1px 1px 0;box-sizing:border-box;}
.group{height:74px;box-sizing:border-box;border:1px solid #a5a5a5;border-color:#bdbdbd #a5a5a5 #a0a0a0 #fff;padding:10px 7px 0 6px;}
.msg{height:31px;box-sizing:border-box;border:1px solid #b8d6ea;border-top-color:#6d9dc4;padding-left:2px;line-height:17px;}
.status{text-align:center;margin-top:9px;}
.dbtns{display:flex;gap:33px;justify-content:flex-end;margin-top:7px;padding-right:9px;}
.btn{width:72px;height:22px;padding:0;font:12px/20px "Noto Sans CJK SC",sans-serif;border:1px solid #b5b5b5;border-radius:3px;background:#efefef;color:#8f8f8f;}
.btn.primary{border:1px solid #3a8dc9;color:#000;background:linear-gradient(#eef6fb,#e2eff7 50%,#c5e0f1);box-shadow:inset 0 0 2px #8fd0f0;}
</style>
